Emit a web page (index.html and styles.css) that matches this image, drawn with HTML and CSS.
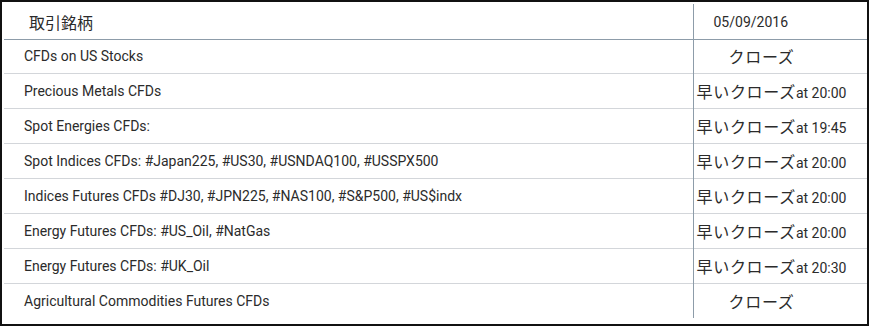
FILE: index.html
```html
<!DOCTYPE html>
<html lang="ja">
<head>
    <meta charset="UTF-8">
    <title>取引銘柄</title>
    <link rel="stylesheet" href="styles.css">
</head>
<body>
    <div class="frame">
        <table class="hours">
            <thead>
                <tr>
                    <th class="symbol-head">取引銘柄</th>
                    <th class="date">05/09/2016</th>
                </tr>
            </thead>
            <tbody>
                <tr>
                    <td>CFDs on US Stocks</td>
                    <td class="status closed"><span class="jp">クローズ</span></td>
                </tr>
                <tr>
                    <td>Precious Metals CFDs</td>
                    <td class="status"><span class="jp">早いクローズ</span>at 20:00</td>
                </tr>
                <tr>
                    <td>Spot Energies CFDs:</td>
                    <td class="status"><span class="jp">早いクローズ</span>at 19:45</td>
                </tr>
                <tr>
                    <td>Spot Indices CFDs: #Japan225, #US30, #USNDAQ100, #USSPX500</td>
                    <td class="status"><span class="jp">早いクローズ</span>at 20:00</td>
                </tr>
                <tr>
                    <td>Indices Futures CFDs #DJ30, #JPN225, #NAS100, #S&amp;P500, #US$indx</td>
                    <td class="status"><span class="jp">早いクローズ</span>at 20:00</td>
                </tr>
                <tr>
                    <td>Energy Futures CFDs: #US_Oil, #NatGas</td>
                    <td class="status"><span class="jp">早いクローズ</span>at 20:00</td>
                </tr>
                <tr>
                    <td>Energy Futures CFDs: #UK_Oil</td>
                    <td class="status"><span class="jp">早いクローズ</span>at 20:30</td>
                </tr>
                <tr>
                    <td>Agricultural Commodities Futures CFDs</td>
                    <td class="status closed"><span class="jp">クローズ</span></td>
                </tr>
            </tbody>
        </table>
    </div>
</body>
</html>
```

FILE: styles.css
```css
* {
    margin: 0;
    padding: 0;
    box-sizing: border-box;
}

body {
    background: #fff;
    font-family: Roboto, 'Noto Sans CJK JP', sans-serif;
    color: #2b2b2b;
}

.frame {
    width: 869px;
    height: 326px;
    border: 2px solid #111;
    padding: 2px 0 0 2px;
}

.hours {
    width: 100%;
    border-collapse: collapse;
    table-layout: fixed;
}

.hours th,
.hours td {
    text-align: left;
    font-weight: 400;
    white-space: nowrap;
    vertical-align: middle;
}

.hours th {
    height: 35px;
    border-bottom: 1px solid #8d9ca9;
    padding-top: 2px;
}

.hours td {
    height: 35px;
    font-size: 14px;
    padding-left: 20px;
    border-top: 1px solid #d3d6da;
}

.hours tbody tr:first-child td {
    border-top: none;
    height: 34px;
}

.symbol-head {
    width: 689px;
    padding-left: 25px;
    font-size: 16px;
    font-family: 'Noto Sans CJK JP', sans-serif;
}

.hours th.date {
    padding-left: 20px;
    font-size: 14px;
}

.hours .date,
.hours .status {
    border-left: 1px solid #8d9ca9;
}

.hours td.status {
    padding-left: 3px;
}

.hours td.closed {
    padding-left: 35px;
}

.jp {
    font-family: 'Noto Sans CJK JP', sans-serif;
    font-size: 16px;
    letter-spacing: 0.7px;
}
```
